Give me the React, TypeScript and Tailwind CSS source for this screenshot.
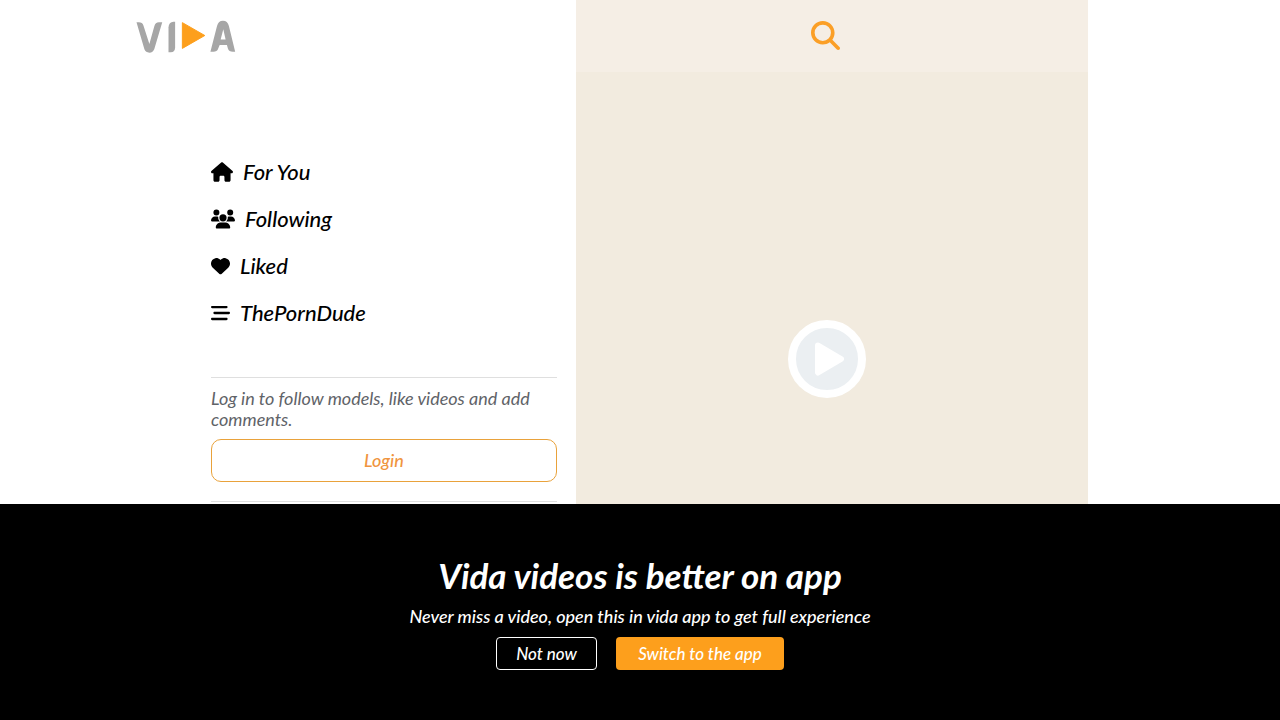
import { FaBarsStaggered, FaHeart, FaHouse, FaMagnifyingGlass, FaUsers } from 'react-icons/fa6'

const links = [
  { label: 'For You', icon: FaHouse, size: 'w-[22px]' },
  { label: 'Following', icon: FaUsers, size: 'w-6' },
  { label: 'Liked', icon: FaHeart, size: 'w-[19px]' },
  { label: 'ThePornDude', icon: FaBarsStaggered, size: 'w-[19px]' },
]

function Logo() {
  return (
    <svg viewBox="48 60 300 100" className="h-[33px] w-[100px]" role="img" aria-label="Vida">
      <g fill="#a6a6a6">
        <path d="M48 67 H55 Q66 67 69 77 L87 133 L102 79 Q105 67 116 67 H126 L102 148 Q98 159 87 159 Q76 159 72 149 Z" />
        <path d="M165 65 V143 Q165 156 152 158 H145 V82 Q146 66 160 65 Z" />
        <path
          fillRule="evenodd"
          d="M272 156 L292 78 Q296 62 310 62 Q324 62 328 78 L347 156 H340 Q328 156 325 146 L322 136 H300 L295 148 Q292 156 281 156 Z M303 119 H318 L311 88 Z"
        />
      </g>
      <path d="M187 68 L255 107 L187 146 Z" fill="#fd9f1c" stroke="#fd9f1c" strokeWidth="3" strokeLinejoin="round" />
    </svg>
  )
}

function Sidebar() {
  return (
    <aside className="w-[35vw] shrink-0">
      <a href="#" className="block pl-2 pt-5">
        <Logo />
      </a>

      <div className="pl-[83px] pr-[19px] pt-[105px]">
        <nav className="flex flex-col gap-5">
          {links.map(({ label, icon: Icon, size }) => (
            <a key={label} href="#" className="flex h-[27px] items-center gap-[10px] text-[22px] font-medium text-black">
              <Icon className={`h-5 ${size}`} />
              {label}
            </a>
          ))}
        </nav>

        {/* Login */}
        <div className="mt-[51px] border-y border-[#dfdfdf] pb-[19px] pt-[10px]">
          <p className="text-[18px] leading-[21px] text-[#5f6368]">
            Log in to follow models, like videos and add comments.
          </p>
          <button
            type="button"
            className="mt-[9px] h-[43px] w-full rounded-[10px] border border-[#e9a23b] text-[18px] font-medium text-[#f0953f]"
          >
            Login
          </button>
        </div>
      </div>
    </aside>
  )
}

function Feed() {
  return (
    <main className="flex w-[40vw] shrink-0 flex-col bg-[#f2ebdf]">
      <div className="flex h-[72px] shrink-0 justify-center bg-[#f5eee5] pr-[13px] pt-5">
        <button type="button" aria-label="Search" className="h-[30px] text-[#fb9f26]">
          <FaMagnifyingGlass className="size-[29px]" />
        </button>
      </div>
      <div className="flex justify-center pr-[10px] pt-[248px]">
        <button type="button" aria-label="Play">
          <svg viewBox="0 0 78 78" className="size-[78px]">
            <circle cx="39" cy="39" r="35" fill="#ebeff2" stroke="#fff" strokeWidth="8" />
            <path d="M30 25.5 L53 39 L30 52.5 Z" fill="#fff" stroke="#fff" strokeWidth="6" strokeLinejoin="round" />
          </svg>
        </button>
      </div>
    </main>
  )
}

function AppBanner() {
  return (
    <section className="flex h-[30vh] flex-col items-center justify-center bg-black pb-[2px] text-white">
      <h2 className="text-[35px] font-bold leading-[46px]">Vida videos is better on app</h2>
      <p className="mt-[6px] text-[18px] font-medium leading-6">
        Never miss a video, open this in vida app to get full experience
      </p>
      <div className="mt-[9px] flex gap-[19px]">
        <button type="button" className="h-[33px] w-[101px] rounded-[4px] border border-white text-[17px] font-medium">
          Not now
        </button>
        <button type="button" className="h-[33px] w-[168px] rounded-[4px] bg-[#fd9f1c] text-[17px] font-medium">
          Switch to the app
        </button>
      </div>
    </section>
  )
}

export default function App() {
  return (
    <div className="flex h-screen flex-col bg-white font-['Lato','Open_Sans',sans-serif] italic">
      <div className="flex min-h-0 flex-1 overflow-hidden pl-[10vw]">
        <Sidebar />
        <Feed />
      </div>
      <AppBanner />
    </div>
  )
}
